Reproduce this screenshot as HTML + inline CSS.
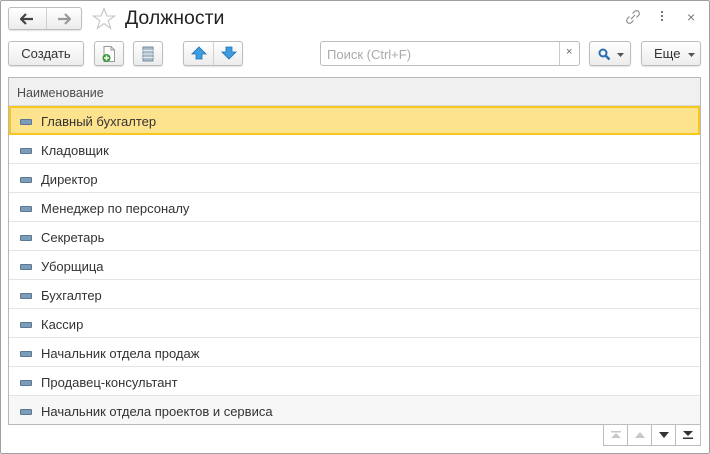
<!DOCTYPE html>
<html><head><meta charset="utf-8"><style>
*{box-sizing:border-box;margin:0;padding:0}
body{width:710px;height:454px;background:#fff;font-family:"Liberation Sans",Arial,sans-serif;font-size:12px;color:#333;position:relative;overflow:hidden}
.win{position:absolute;left:0;top:0;width:710px;height:454px;border:1px solid #a0a0a0;border-radius:2px}
.btn{position:absolute;height:25px;border:1px solid #bdbdbd;border-radius:3px;background:linear-gradient(#fff,#ececec);box-shadow:0 1px 1px rgba(0,0,0,.12);display:flex;align-items:center;justify-content:center;color:#333;font-size:13px}
.sep{position:absolute;top:0;bottom:0;width:1px;background:#d0d0d0}
.table{position:absolute;left:8px;top:77px;width:693px;height:348px;border:1px solid #b8b8b8;overflow:hidden}
.hdr{height:28px;background:#f0f0f0;border-bottom:1px solid #d8d8d8;padding-left:8px;line-height:30px;color:#4d4d4d;font-size:12.5px}
.row{height:29px;border-bottom:1px solid #e4e4e4;position:relative;line-height:31px;padding-left:32px;color:#333;font-size:13px}
.row:before{content:"";position:absolute;left:11px;top:13px;width:10px;height:4px;background:#7d9cb8;border:1px solid #5a7894;border-radius:1px}
.sel{background:#fde38e;outline:2px solid #f6c81f;outline-offset:-2px}
.nav{position:absolute;top:424px;height:22px;width:25px;border:1px solid #bdbdbd;background:#fff;display:flex;align-items:center;justify-content:center}
</style></head><body>
<div class="win"></div>
<div class="btn" style="left:8px;top:7px;width:74px;height:23px">
 <div class="sep" style="left:37px"></div>
 <svg style="position:absolute;left:11px;top:5px" width="14" height="12"><path d="M1 6H13M6 1L1 6L6 11" stroke="#444" stroke-width="2.2" fill="none"/></svg>
 <svg style="position:absolute;left:48px;top:5px" width="14" height="12"><path d="M1 6H13M8 1L13 6L8 11" stroke="#999" stroke-width="2.2" fill="none"/></svg>
</div>
<svg style="position:absolute;left:92px;top:7px" width="24" height="23"><path d="M12 1.5L14.8 9H22.5L16.3 13.6L18.6 21.3L12 16.6L5.4 21.3L7.7 13.6L1.5 9H9.2Z" fill="none" stroke="#c4c4c4" stroke-width="1.1"/></svg>
<div style="position:absolute;left:125px;top:7px;font-size:19.5px;color:#222">Должности</div>
<svg style="position:absolute;left:625px;top:9px" width="16" height="16"><path d="M6 10L10 6M7.5 4.5L9.5 2.5a2.5 2.5 0 0 1 4 4L11.5 8.5M8.5 11.5L6.5 13.5a2.5 2.5 0 0 1-4-4L4.5 7.5" stroke="#888" stroke-width="1.1" fill="none"/></svg>
<div style="position:absolute;left:661px;top:11px;width:2px">
 <div style="width:2px;height:2px;background:#777;margin-bottom:2px"></div><div style="width:2px;height:2px;background:#777;margin-bottom:2px"></div><div style="width:2px;height:2px;background:#777"></div></div>
<div style="position:absolute;left:687px;top:9px;font-size:14px;color:#777">×</div>
<div class="btn" style="left:8px;top:41px;width:76px">Создать</div>
<div class="btn" style="left:94px;top:41px;width:30px">
 <svg width="16" height="18"><path d="M3 1.5H10L13.5 5V16.5H3Z" fill="#fff" stroke="#999"/><path d="M10 1.5V5H13.5" fill="none" stroke="#999"/><circle cx="5.5" cy="13" r="4" fill="#3a9a3a"/><path d="M5.5 10.5V15.5M3 13H8" stroke="#fff" stroke-width="1.5"/></svg></div>
<div class="btn" style="left:133px;top:41px;width:30px">
 <svg width="12" height="16"><rect x="1" y="1" width="10" height="14" fill="#a9bccb" stroke="#7a8fa0"/><path d="M1 4.5H11M1 8H11M1 11.5H11" stroke="#e8eef3"/></svg></div>
<div class="btn" style="left:183px;top:41px;width:60px">
 <div class="sep" style="left:29px"></div>
 <svg style="position:absolute;left:7px;top:4px" width="16" height="14"><path d="M8 1L15 8H11V13H5V8H1Z" fill="#3c9ee0" stroke="#1f6fb0" stroke-width=".8"/></svg>
 <svg style="position:absolute;left:37px;top:4px" width="16" height="14"><path d="M8 13L15 6H11V1H5V6H1Z" fill="#3c9ee0" stroke="#1f6fb0" stroke-width=".8"/></svg>
</div>
<div style="position:absolute;left:320px;top:41px;width:260px;height:25px;border:1px solid #bdbdbd;border-radius:3px;background:#fff">
 <span style="position:absolute;left:6px;top:5px;color:#aaa;font-size:13px">Поиск (Ctrl+F)</span>
 <div style="position:absolute;left:238px;top:0;bottom:0;width:1px;background:#ccc"></div>
 <span style="position:absolute;left:245px;top:4px;color:#666;font-size:11px">×</span>
</div>
<div class="btn" style="left:589px;top:41px;width:42px">
 <svg style="position:absolute;left:8px;top:6px" width="13" height="13"><circle cx="5" cy="5" r="3.5" fill="none" stroke="#2a6db0" stroke-width="2"/><path d="M7.5 7.5L11.5 11.5" stroke="#2a6db0" stroke-width="2.4"/></svg>
 <svg style="position:absolute;left:27px;top:11px" width="7" height="4"><path d="M0 0H7L3.5 4Z" fill="#555"/></svg>
</div>
<div class="btn" style="left:641px;top:41px;width:60px;justify-content:flex-start;padding-left:12px">Еще
 <svg style="position:absolute;left:46px;top:11px" width="7" height="4"><path d="M0 0H7L3.5 4Z" fill="#555"/></svg></div>
<div class="table">
 <div class="hdr">Наименование</div>
 <div class="row sel">Главный бухгалтер</div>
 <div class="row">Кладовщик</div>
 <div class="row">Директор</div>
 <div class="row">Менеджер по персоналу</div>
 <div class="row">Секретарь</div>
 <div class="row">Уборщица</div>
 <div class="row">Бухгалтер</div>
 <div class="row">Кассир</div>
 <div class="row">Начальник отдела продаж</div>
 <div class="row">Продавец-консультант</div>
 <div class="row" style="background:#f7f7f7;border-bottom:none">Начальник отдела проектов и сервиса</div>
</div>
<div class="nav" style="left:603px"><svg width="10" height="8"><path d="M0 0H10V1.5H0ZM5 2L10 7H0Z" fill="#c8c8c8"/></svg></div>
<div class="nav" style="left:627px"><svg width="10" height="6"><path d="M5 0L10 6H0Z" fill="#c8c8c8"/></svg></div>
<div class="nav" style="left:651px"><svg width="10" height="6"><path d="M5 6L10 0H0Z" fill="#333"/></svg></div>
<div class="nav" style="left:675px;width:26px"><svg width="10" height="8"><path d="M0 0H10L5 5ZM0 6.5H10V8H0Z" fill="#333"/></svg></div>
</body></html>
